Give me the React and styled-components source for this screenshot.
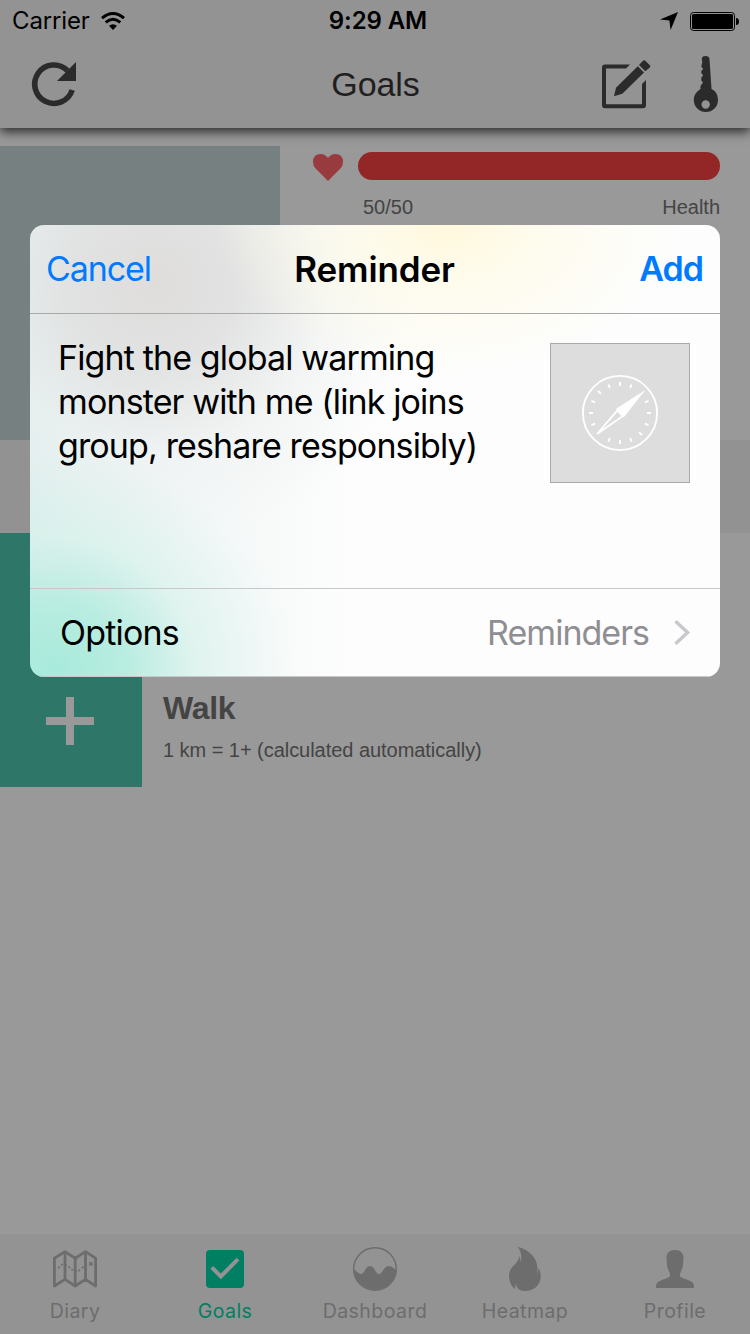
import React from "react";
import styled, { createGlobalStyle } from "styled-components";

const GlobalStyle = createGlobalStyle`
  *, *::before, *::after { box-sizing: border-box; }
  body { margin: 0; background: #999; }
`;

const SANS = `Inter, "Liberation Sans", sans-serif`;
const HELV = `"Liberation Sans", Arial, sans-serif`;

const Screen = styled.div`
  position: relative;
  width: 750px;
  height: 1334px;
  display: flex;
  flex-direction: column;
  background: #999;
  overflow: hidden;
  font-family: ${SANS};
`;

const Text = styled.span`
  display: block;
  white-space: nowrap;
  font-family: ${(p) => p.$font || SANS};
  font-size: ${(p) => p.$size}px;
  font-weight: ${(p) => p.$weight || 400};
  letter-spacing: ${(p) => p.$track || 0}px;
  line-height: ${(p) => p.$line || 40}px;
  color: ${(p) => p.$color || "#000"};
`;

const Header = styled.header`
  flex: none;
  height: 128px;
  background: #939393;
  box-shadow: 0 4px 10px rgba(0, 0, 0, 0.7);
  z-index: 1;
`;

const StatusBar = styled.div`
  height: 40px;
  display: grid;
  grid-template-columns: 1fr auto 1fr;
  align-items: center;
  padding: 1px 11px 0 12px;
`;

const Clock = styled.div`
  padding-left: 5px;
`;

const StatusGroup = styled.div`
  display: flex;
  align-items: center;
  gap: ${(p) => p.$gap}px;
  justify-content: ${(p) => (p.$end ? "flex-end" : "flex-start")};
`;

const NavBar = styled.div`
  height: 88px;
  display: grid;
  grid-template-columns: 1fr auto 1fr;
  align-items: center;
  padding: 0 31px 0 32px;
`;

const NavActions = styled.div`
  display: flex;
  justify-content: ${(p) => (p.$end ? "flex-end" : "flex-start")};
  align-items: center;
  gap: 43px;
`;

const Icon = styled.svg`
  display: block;
  flex: none;
  overflow: visible;
`;

const Hero = styled.section`
  flex: none;
  margin-top: 18px;
  height: 294px;
  display: flex;
`;

const Avatar = styled.div`
  width: 280px;
  background: #768080;
`;

const Stats = styled.div`
  flex: 1;
  padding: 6px 30px 0 33px;
`;

const HealthRow = styled.div`
  height: 28px;
  display: flex;
  align-items: center;
  gap: 15px;
`;

const HeartSlot = styled.div`
  padding-top: 3px;
`;

const HealthBar = styled.div`
  flex: 1;
  height: 28px;
  border-radius: 14px;
  background: #932626;
`;

const HealthLabels = styled.div`
  display: flex;
  justify-content: space-between;
  padding: 15px 0 0 50px;
`;

const Band = styled.div`
  flex: none;
  height: 93px;
  background: #929292;
`;

const HabitRow = styled.div`
  flex: none;
  height: ${(p) => p.$height}px;
  display: flex;
`;

const HabitButton = styled.div`
  width: 142px;
  padding-right: 2px;
  display: flex;
  align-items: center;
  justify-content: center;
  background: #2e7768;
`;

const HabitText = styled.div`
  padding: 33px 0 0 21px;
`;

const TabBar = styled.nav`
  flex: none;
  margin-top: auto;
  height: 100px;
  display: grid;
  grid-template-columns: repeat(5, 1fr);
  background: #939393;
`;

const Tab = styled.div`
  display: flex;
  flex-direction: column;
  align-items: center;
  color: ${(p) => (p.$active ? "#007f63" : "#6d6d6d")};
`;

const TabIcon = styled.div`
  height: 60px;
  padding-top: 10px;
  display: flex;
  align-items: center;
`;

const Sheet = styled.div`
  position: absolute;
  z-index: 2;
  left: 30px;
  top: 225px;
  width: 690px;
  height: 452px;
  border-radius: 14px;
  overflow: hidden;
  display: flex;
  flex-direction: column;
  background:
    radial-gradient(ellipse 240px 220px at 25px 445px, rgba(166, 234, 219, 0.98) 0%, rgba(180, 236, 223, 0.9) 30%, rgba(210, 241, 233, 0.55) 60%, rgba(240, 250, 247, 0) 100%),
    radial-gradient(ellipse 230px 150px at 415px 0px, #fff8dc 0%, rgba(255, 251, 230, 0.75) 35%, rgba(254, 254, 246, 0) 100%),
    radial-gradient(ellipse 270px 260px at 125px 60px, #dfdddc 0%, rgba(224, 224, 224, 0.9) 30%, rgba(238, 240, 240, 0.5) 65%, rgba(253, 253, 253, 0) 100%),
    linear-gradient(90deg, #e0efee 0, #f3f7f7 150px, #fdfdfd 330px);
`;

const SheetHeader = styled.div`
  flex: none;
  height: 89px;
  display: grid;
  grid-template-columns: 1fr auto 1fr;
  align-items: center;
  padding: 0 17px 0 16px;
  border-bottom: 1px solid #a9aaa8;
`;

const AddButton = styled.div`
  justify-self: end;
`;

const SheetBody = styled.div`
  flex: 1;
  display: flex;
  justify-content: space-between;
  align-items: flex-start;
  padding: 22px 30px 0 28px;
`;

const Thumb = styled.div`
  width: 140px;
  height: 140px;
  margin-top: 7px;
  display: flex;
  align-items: center;
  justify-content: center;
  background: #ddd;
  border: 1px solid #a9a9a9;
`;

const OptionsRow = styled.div`
  flex: none;
  height: 89px;
  display: flex;
  justify-content: space-between;
  align-items: center;
  padding: 1px 30px 0 30px;
  border-top: 1px solid #c8c7cc;
  border-bottom: 1px solid #c8c7cc;
`;

const OptionValue = styled.div`
  display: flex;
  align-items: center;
  gap: 25px;
`;

const WifiIcon = () => (
  <Icon width="24" height="18" viewBox="0 0 24 18">
    <g fill="none" stroke="#000" strokeWidth="3">
      <path d="M1 6.2Q12 -3.1 23 6.2" />
      <path d="M4.7 10.4Q12 4.2 19.3 10.4" />
    </g>
    <path d="M8 13.7Q12 10.6 16 13.7L12 18z" />
  </Icon>
);

const LocationIcon = () => (
  <Icon width="18" height="18" viewBox="0 0 18 18">
    <path d="M18 0L10.6 18L9.4 8.6L0 7.6z" />
  </Icon>
);

const BatteryIcon = () => (
  <Icon width="49" height="19" viewBox="0 0 49 19">
    <rect x=".5" y=".5" width="44" height="18" rx="3" fill="none" stroke="#000" />
    <rect x="2" y="2" width="41" height="15" rx="1.5" />
    <path d="M46 6q3 0 3 3.5t-3 3.5z" />
  </Icon>
);

const RefreshIcon = () => (
  <Icon width="44" height="44" viewBox="0 0 44 44">
    <path d="M35.6 8.700A19.200 19.200 0 1 0 40.200 28" fill="none" stroke="#2b2b2b" strokeWidth="5.6" />
    <path d="M44 0V19H25z" fill="#2b2b2b" />
  </Icon>
);

const ComposeIcon = () => (
  <Icon width="49" height="49" viewBox="0 0 49 49">
    <g fill="#2b2b2b">
      <path d="M28 4.500H3Q0 4.500 0 7.500V45.300Q0 48.300 3 48.300H41Q44 48.300 44 45.300V20L40 24V44.300H4V8.500H24z" />
      <path d="M35.800 6.300L42 12.500L20.300 33.800L12 36.300L14 27.800z" />
      <path d="M37 5L41 .8Q42.200 -.3 43.400.8L47.800 5.200Q48.800 6.300 47.800 7.400L43.300 11.300z" />
    </g>
  </Icon>
);

const KeyIcon = () => (
  <Icon width="25" height="57" viewBox="0.500 1 25 57">
    <path
      fill="#2b2b2b"
      fillRule="evenodd"
      d="M8.300 4Q8.300 1 12 1Q15.700 1 16 4L18 34Q24.500 37 24.500 45A12.100 12.100 0 0 1 .3 45Q.3 38 7 34V31L9.500 27.500L7.800 25.500V22.500L9.700 20.500L7.800 18V16L9.700 14L7.800 11.500L8.800 7z M12.200 45.300A4.200 4.200 0 1 0 12.200 53.700A4.200 4.200 0 1 0 12.200 45.300z"
    />
  </Icon>
);

const HeartIcon = () => (
  <Icon width="30" height="27" viewBox="0 0 30 27">
    <path fill="#983b3e" d="M15 27L2.600 14.500Q0 11.800 0 8Q0 0 7.600 0Q12 0 15 4Q18 0 22.400 0Q30 0 30 8Q30 11.800 27.400 14.500z" />
  </Icon>
);

const PlusIcon = () => (
  <Icon width="48" height="48" viewBox="0 0 48 48">
    <path d="M20 0h8v20h20v8h-20v20h-8v-20h-20v-8h20z" fill="#999" />
  </Icon>
);

const ticks = [0, 22, 67, 90, 113, 135, 158, 180, 202, 247, 270, 293, 315, 338];

const CompassIcon = () => (
  <Icon width="76" height="76" viewBox="-38 -38 76 76">
    <circle r="37.1" fill="none" stroke="#fff" strokeWidth="1.8" />
    <g fill="#fff">
      {ticks.map((a) => (
        <rect key={a} x="-1" y="-31" width="2" height="4" transform={`rotate(${a})`} />
      ))}
      <path d="M25.300 -23L-4 -4.200L3.800 4.200z" />
    </g>
    <path d="M-23 21L-2.600 -2.600L2.600 3.200z" fill="none" stroke="#fff" strokeWidth="1.8" />
  </Icon>
);

const ChevronIcon = () => (
  <Icon width="16" height="26" viewBox="0 0 16 26">
    <path d="M1.500 1.200L13.600 12.500L1.500 23.800" fill="none" stroke="#c7c7cc" strokeWidth="3.4" />
  </Icon>
);

const MapIcon = () => (
  <Icon width="44" height="38" viewBox="0 0 44 38">
    <g fill="none" stroke="currentColor" strokeWidth="2.8" strokeLinejoin="round">
      <path d="M1.400 8.200L12 1.600L22.200 8.200L32.500 1.600L42.600 8.200V36L32.500 29.400L22.200 36L12 29.400L1.400 36z" />
      <path d="M12 2V29M22.200 8V36M32.500 2V29" />
      <path d="M5.500 18.200Q9 12.500 13 15T20 20.500T28 19T35 13.500" strokeWidth="1.7" strokeDasharray="2 2" />
      <path d="M36.300 12.300l3.200 3.200m0-3.200l-3.200 3.200" strokeWidth="1.5" />
    </g>
  </Icon>
);

const CheckIcon = () => (
  <Icon width="38" height="38" viewBox="0 0 38 38">
    <rect width="38" height="38" rx="4" fill="currentColor" />
    <path d="M5.800 17.400L14.800 26.400L32 9.200" fill="none" stroke="#939393" strokeWidth="4" />
  </Icon>
);

const WaveIcon = () => (
  <Icon width="44" height="44" viewBox="0 0 44 44">
    <circle cx="22" cy="22" r="21.300" fill="none" stroke="currentColor" strokeWidth="1.4" />
    <path fill="currentColor" d="M.3 22C3 23 5 27 8 27C11.500 27 12.500 19 17 19C21.500 19 22.500 27 26 27C29.500 27 31 19 36 19C39 19 41 22 43.700 23A21.800 21.800 0 0 1 .3 23z" />
  </Icon>
);

const FlameIcon = () => (
  <Icon width="32" height="44" viewBox="0 0 32 44">
    <path
      fill="currentColor"
      d="M8.500 0C20 2 28 11 28.500 21C28.500 23 28.200 25 28.300 27L29.600 21C31 24 32 27 31.800 30C31 39 24 44 16 44C10 44 7.500 41 6.500 36.500L6 42C2 39 0 34 0 29C0 19 9 18 10.400 9L11.800 15C13 9 12 4 8.500 0z"
    />
  </Icon>
);

const PersonIcon = () => (
  <Icon width="38" height="38" viewBox="0 0 38 38">
    <path
      fill="currentColor"
      d="M19 0C24.500 0 27.500 3 27.500 8L27 15C26.500 19 25 21 24 24V26.500C27 29 33 29.500 36 32C38 33.600 38 35 38 38H0C0 35 0 33.600 2 32C5 29.500 11 29 14 26.500V24C13 21 11.500 19 11 15L10.500 8C10.500 3 13.500 0 19 0z"
    />
  </Icon>
);

const tabs = [
  { label: "Diary", icon: MapIcon },
  { label: "Goals", icon: CheckIcon, active: true },
  { label: "Dashboard", icon: WaveIcon },
  { label: "Heatmap", icon: FlameIcon },
  { label: "Profile", icon: PersonIcon },
];

export default function App() {
  return (
    <Screen>
      <GlobalStyle />
      <Header>
        <StatusBar>
          <StatusGroup $gap={11}>
            <Text $size={24} $track={-0.15}>Carrier</Text>
            <WifiIcon />
          </StatusGroup>
          <Clock>
            <Text $size={24} $weight={600} $track={-0.1}>9:29 AM</Text>
          </Clock>
          <StatusGroup $gap={12} $end>
            <LocationIcon />
            <BatteryIcon />
          </StatusGroup>
        </StatusBar>
        <NavBar>
          <NavActions>
            <RefreshIcon />
          </NavActions>
          <Text $font={HELV} $size={34} $track={-0.1} $color="#1f1f1f">Goals</Text>
          <NavActions $end>
            <ComposeIcon />
            <KeyIcon />
          </NavActions>
        </NavBar>
      </Header>

      <Hero>
        <Avatar />
        <Stats>
          <HealthRow>
            <HeartSlot>
              <HeartIcon />
            </HeartSlot>
            <HealthBar />
          </HealthRow>
          <HealthLabels>
            <Text $font={HELV} $size={20} $line={24} $color="#444">50/50</Text>
            <Text $font={HELV} $size={20} $line={24} $color="#444">Health</Text>
          </HealthLabels>
        </Stats>
      </Hero>
      <Band />
      <HabitRow $height={122}>
        <HabitButton />
      </HabitRow>
      <HabitRow $height={132}>
        <HabitButton>
          <PlusIcon />
        </HabitButton>
        <HabitText>
          <Text $font={HELV} $size={32} $weight={700} $track={-0.3} $color="#444">Walk</Text>
          <Text $font={HELV} $size={20} $line={44} $track={-0.04} $color="#444">1 km = 1+ (calculated automatically)</Text>
        </HabitText>
      </HabitRow>

      <TabBar>
        {tabs.map(({ label, icon: Glyph, active }) => (
          <Tab key={label} $active={active}>
            <TabIcon>
              <Glyph />
            </TabIcon>
            <Text $size={19.5} $line={34} $track={0.45} $color="inherit">{label}</Text>
          </Tab>
        ))}
      </TabBar>

      <Sheet>
        <SheetHeader>
          <Text $size={34} $track={-1.1} $color="#007aff">Cancel</Text>
          <Text $size={35} $weight={600} $track={-0.15}>Reminder</Text>
          <AddButton>
            <Text $size={34} $weight={600} $track={-0.95} $color="#007aff">Add</Text>
          </AddButton>
        </SheetHeader>
        <SheetBody>
          <Text $size={34} $line={44} $track={-0.87}>
            Fight the global warming
            <br />
            monster with me (link joins
            <br />
            group, reshare responsibly)
          </Text>
          <Thumb>
            <CompassIcon />
          </Thumb>
        </SheetBody>
        <OptionsRow>
          <Text $size={34} $track={-0.8}>Options</Text>
          <OptionValue>
            <Text $size={34} $track={-0.98} $color="#8e8e93">Reminders</Text>
            <ChevronIcon />
          </OptionValue>
        </OptionsRow>
      </Sheet>
    </Screen>
  );
}
